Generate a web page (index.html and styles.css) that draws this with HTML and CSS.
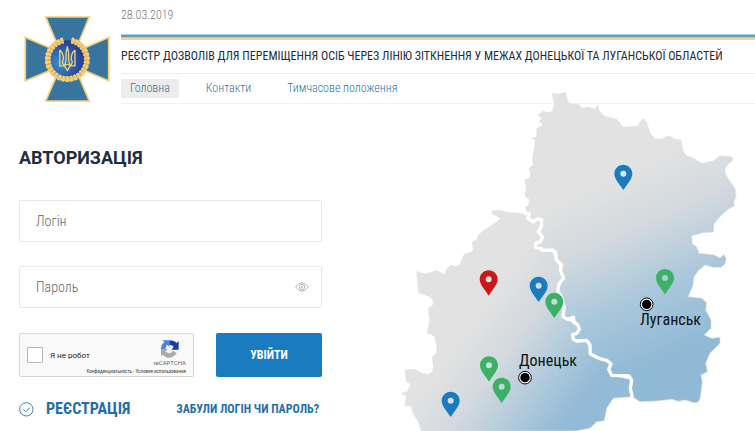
FILE: index.html
```html
<!DOCTYPE html>
<html lang="uk">

<head>
    <meta charset="UTF-8">
    <meta name="viewport" content="width=device-width, initial-scale=1.0">
    <title>Реєстр дозволів - Авторизація</title>
    <link rel="stylesheet" href="styles.css">
</head>

<body>
    <header class="header">
        <svg class="logo" viewBox="42 47 258 260" aria-hidden="true">
            <defs>
                <radialGradient id="medal" cx="0.3" cy="0.6" r="0.8">
                    <stop offset="0" stop-color="#3a8fc4" />
                    <stop offset="0.6" stop-color="#2a4fa0" />
                    <stop offset="1" stop-color="#20307c" />
                </radialGradient>
            </defs>
            <g fill="#37759f" stroke="#f0cd78" stroke-width="5">
                <path d="M107 50H238L196 152H150Z" />
                <path d="M107 304H238L196 204H150Z" />
                <path d="M45 112L148 156V200L45 243Z" />
                <path d="M297 112L196 156V200L297 243Z" />
            </g>
            <circle cx="172" cy="178" r="58" fill="url(#medal)" />
            <!-- wreath -->
            <path d="M160 121A59 59 0 1 0 184 121" fill="none" stroke="#e8b95e" stroke-width="14" />
            <path d="M160 121A59 59 0 1 0 184 121" fill="none" stroke="#f3cf80" stroke-width="18" stroke-dasharray="8 4" />
            <path d="M157 124A57 57 0 1 0 187 124" fill="none" stroke="#cf9a42" stroke-width="3" stroke-dasharray="4 8" />
            <!-- trident -->
            <path d="M149 150V198H163M195 150V198H181M149 150Q162 162 160 180Q153 184 163 198L172 212L181 198Q191 184 184 180Q182 162 195 150M172 139L168 160Q170 183 163 198M172 139L176 160Q174 183 181 198M163 198Q172 188 181 198" fill="none" stroke="#f1d07c" stroke-width="4" />
        </svg>
        <div class="header-content">
            <time class="date" datetime="2019-03-28">28.03.2019</time>
            <div class="stripe"></div>
            <h1 class="site-title">РЕЄСТР ДОЗВОЛІВ ДЛЯ ПЕРЕМІЩЕННЯ ОСІБ ЧЕРЕЗ ЛІНІЮ ЗІТКНЕННЯ У МЕЖАХ ДОНЕЦЬКОЇ ТА ЛУГАНСЬКОЇ ОБЛАСТЕЙ</h1>
            <nav class="nav">
                <a class="nav-link active" href="#">Головна</a>
                <a class="nav-link" href="#">Контакти</a>
                <a class="nav-link" href="#">Тимчасове положення</a>
            </nav>
        </div>
    </header>

    <main class="main">
        <form class="login">
            <h2 class="login-title">АВТОРИЗАЦІЯ</h2>
            <div class="field">
                <input class="field-input" type="text" name="login" placeholder="Логін" aria-label="Логін">
            </div>
            <div class="field">
                <input class="field-input" type="password" name="password" placeholder="Пароль" aria-label="Пароль">
                <button class="eye" type="button" aria-label="Показати пароль">
                    <svg width="14" height="10" viewBox="0 0 42 30" fill="none" stroke="#b4b4b4" stroke-width="3">
                        <path d="M2 15Q21 -11 40 15Q21 41 2 15Z" />
                        <circle cx="21" cy="15" r="8" />
                        <circle cx="21" cy="15" r="2" />
                    </svg>
                </button>
            </div>
            <div class="submit-row">
                <div class="captcha">
                    <input class="captcha-check" type="checkbox" id="robot">
                    <label class="captcha-label" for="robot">Я не робот</label>
                    <div class="captcha-brand">
                        <svg width="19" height="18" viewBox="0 0 57 54" aria-hidden="true">
                            <path d="M3 27C3 16 8 9 14 7L7 1H28V20L22 14C19 17 17 21 17 27Z" fill="#4a83e0" />
                            <path d="M28 1C38 1 45 4 50 9L56 3V29H34L41 21C38 17 34 15 28 15Z" fill="#1c3aa9" />
                            <path d="M3 27H24L17 34C21 41 34 42 39 32L50 40C38 58 18 56 8 44L3 49Z" fill="#ababab" />
                        </svg>
                        <span class="captcha-name">reCAPTCHA</span>
                    </div>
                    <small class="captcha-terms">Конфиденциальность - Условия использования</small>
                </div>
                <button class="login-button" type="submit">УВІЙТИ</button>
            </div>
            <div class="links">
                <a class="register" href="#">
                    <svg width="15" height="15" viewBox="0 0 45 45" fill="none" stroke="#3f86b8" stroke-width="3" aria-hidden="true">
                        <circle cx="22" cy="22" r="20" />
                        <path d="M13 22L20 29L33 17" />
                    </svg>
                    РЕЄСТРАЦІЯ
                </a>
                <a class="forgot" href="#">ЗАБУЛИ ЛОГІН ЧИ ПАРОЛЬ?</a>
            </div>
        </form>

        <svg class="map" viewBox="0 0 360 351">
            <defs>
                <linearGradient id="luhansk" gradientUnits="userSpaceOnUse" x1="600" y1="310" x2="830" y2="830">
                    <stop offset="0" stop-color="#e2e2e2" />
                    <stop offset="0.3" stop-color="#d3d9de" />
                    <stop offset="0.65" stop-color="#a9c7db" />
                    <stop offset="1" stop-color="#90b9d5" />
                </linearGradient>
                <linearGradient id="donetsk" gradientUnits="userSpaceOnUse" x1="260" y1="680" x2="590" y2="920">
                    <stop offset="0" stop-color="#e2e2e2" />
                    <stop offset="0.35" stop-color="#d3d9de" />
                    <stop offset="0.75" stop-color="#a9c7db" />
                    <stop offset="1" stop-color="#93bad6" />
                </linearGradient>
                <symbol id="pin" viewBox="0 0 54 76" overflow="visible">
                    <path fill-rule="evenodd" d="M27 0C12 0 0 12 0 27C0 44 16 58 27 76C38 58 54 44 54 27C54 12 42 0 27 0ZM27 18A9 9 0 1 1 27 36A9 9 0 1 1 27 18Z" />
                </symbol>
                <g id="city">
                    <circle r="19" fill="#fff" stroke="#000" stroke-width="3" />
                    <circle r="14" />
                </g>
            </defs>
            <svg width="360" height="351" viewBox="0 0 1080 1053">
                <path fill="url(#donetsk)" stroke="#dcdfe1" stroke-width="2" stroke-linejoin="round" d="M388 385L384 402L365 400L335 397L310 391L290 394L292 401L318 414L300 430L272 448L250 465L247 478L232 487L235 508L228 517L208 523L195 555L180 560L168 556L155 568L150 585L125 572L92 582L65 575L68 605L72 638L105 650L115 662L114 676L100 685L105 720L97 758L118 768L126 800L124 820L112 830L116 858L112 876L98 884L80 880L60 868L30 870L34 905L48 912L38 935L20 940L34 948L30 977L48 978L55 1000L70 1025L80 1053H540L585 1045L605 1025L628 1022L635 985L655 955L690 952L712 950L706 925L710 900L650 884L648 852L588 824L575 782L540 780L545 757L552 745L506 708L488 632L504 595L484 540L468 510L424 502L443 472L430 455L440 418L398 416L402 400Z" />
                <path fill="url(#luhansk)" stroke="#dcdfe1" stroke-width="2" stroke-linejoin="round" d="M388 385L402 375L403 358L390 347L394 328L390 300L405 294L407 278L402 266L416 254L413 235L422 180L412 176L425 170L426 145L442 138L443 130L432 125L440 115L430 105L446 93L454 98L472 95L478 75L472 40L490 43L510 37L520 68L530 73L550 73L560 85L580 82L600 88L608 76L612 92L630 110L665 118L675 130L685 142L718 140L730 138L740 119Q748 114 755 128L765 160L780 177L800 178Q823 160 838 177L858 180L862 205L870 225L895 235L920 250L955 243L975 228L1008 230Q1022 238 1002 250L990 265L990 280L1005 305L1020 325L1023 350L1016 365L1018 378L1000 387L970 415L957 432L955 456L925 458L890 467L892 492L905 500L912 520L955 524L975 534L986 524L994 535L990 552L978 562L955 562L930 555L910 572L897 590L894 615L880 650L920 655L935 668L932 690L948 720L948 745L928 765L950 775L975 772L975 790L945 820L932 850L937 875L918 885L922 905L917 945Q915 970 898 968L870 960L850 964L830 958L785 963L735 965L712 950L706 925L710 900L700 888L650 884L644 870L648 852L588 824L585 800L575 782L540 780L532 764L545 757L552 745L545 728L532 714L518 716L506 708L505 672L488 632L492 610L504 595L496 572L500 556L484 540L482 518L468 510L424 502L422 492L436 485L443 472L430 455L440 418L398 416L402 400L390 400Z" />
                <!-- border between the regions -->
                <path fill="none" stroke="#fff" stroke-width="10" stroke-linejoin="round" d="M386 384L390 400L404 400L398 414L416 426L424 417L440 418L439 440L430 455L443 472L436 485L422 490L422 502L440 506L440 511L472 510L482 518L484 540L500 554L496 570L506 595L493 610L488 632L499 650L508 680L504 710L518 718L535 712L537 726L548 733L553 748L545 760L533 764L535 778L545 783L575 781L585 795L586 822L615 836L637 842L648 852L641 868L650 886L702 888L710 900L706 925L712 952" />
                <use href="#pin" x="658" y="254" width="54" height="76" fill="#1a7cbf" />
                <use href="#pin" x="254" y="571" width="54" height="76" fill="#c91a1b" />
                <use href="#pin" x="404" y="590" width="54" height="76" fill="#1a7cbf" />
                <use href="#pin" x="451" y="638" width="54" height="76" fill="#3bb166" />
                <use href="#pin" x="783" y="567" width="54" height="76" fill="#3bb166" />
                <use href="#pin" x="255" y="829" width="54" height="76" fill="#3bb166" />
                <use href="#pin" x="293" y="893" width="54" height="76" fill="#3bb166" />
                <use href="#pin" x="140" y="935" width="54" height="76" fill="#1a7cbf" />
                <use href="#city" x="755" y="673" />
                <use href="#city" x="390" y="893" />
            </svg>
            <text class="city-name" x="245" y="245">Луганськ</text>
            <text class="city-name" x="124" y="286">Донецьк</text>
        </svg>
    </main>
</body>

</html>
```
FILE: styles.css
```css
* {
    box-sizing: border-box;
}

body {
    font-family: "Roboto Condensed", Roboto, "Liberation Sans", sans-serif;
    margin: 0;
    background-color: #fff;
    color: #1f2d3d;
}

a {
    text-decoration: none;
}

.header {
    display: flex;
    gap: 11px;
    padding-left: 24px;
}

.logo {
    flex: none;
    width: 86px;
    height: 86px;
    margin-top: 16px;
}

.header-content {
    flex: 1;
    min-width: 0;
}

.date {
    display: block;
    padding-top: 5px;
    font-size: 12px;
    font-weight: 300;
    line-height: 20px;
    color: #777;
}

.stripe {
    height: 6px;
    margin-top: 9px;
    background: linear-gradient(#a5cfe6 1px, #679db5 1px, #679db5 3px, #d0c691 3px, #d0c691 4px, #f7d585 4px);
}

.site-title {
    margin: 0;
    padding: 6px 0;
    border-bottom: 1px solid #eee;
    font-size: 12px;
    font-weight: 400;
    line-height: 21px;
    white-space: nowrap;
}

.nav {
    display: flex;
    gap: 18px;
    padding: 5px 0;
    border-bottom: 1px solid #f2f2f2;
}

.nav-link {
    padding: 0 9px;
    border-radius: 2px;
    font-size: 12px;
    font-weight: 300;
    line-height: 19px;
    color: #2f74a3;
}

.nav-link.active {
    background-color: #ececec;
}

.main {
    display: grid;
    grid-template-columns: 303px 1fr;
    gap: 73px;
    padding-left: 19px;
}

.login-title {
    margin: 42px 0 30px;
    font-family: Roboto, "Liberation Sans", sans-serif;
    font-size: 18px;
    font-weight: 700;
    line-height: 24px;
}

.field {
    position: relative;
    margin-bottom: 24px;
}

.field-input {
    display: block;
    width: 100%;
    height: 42px;
    padding: 0 40px 0 16px;
    border: 1px solid #e8e8e8;
    border-radius: 2px;
    font-family: inherit;
    font-size: 14px;
    font-weight: 300;
}

.field-input::placeholder {
    color: #666;
    opacity: 1;
}

.eye {
    position: absolute;
    top: 16px;
    right: 13px;
    display: flex;
    padding: 0;
    border: none;
    background: none;
    cursor: pointer;
}

.submit-row {
    display: flex;
    gap: 22px;
    margin-top: 25px;
}

.captcha {
    flex: 1;
    display: grid;
    grid-template-columns: 16px 1fr auto;
    grid-template-rows: 33px 7px;
    column-gap: 7px;
    align-items: center;
    height: 44px;
    padding: 1px 7px;
    border: 1px solid #d8d8d8;
    border-radius: 2px;
    background-color: #f9f9f9;
}

.captcha-check {
    appearance: none;
    width: 16px;
    height: 16px;
    margin: 6px 0 0;
    border: 1px solid #b5b5b5;
    border-radius: 1px;
    background-color: #fff;
}

.captcha-label {
    padding-top: 7px;
    font-family: Roboto, "Liberation Sans", sans-serif;
    font-size: 8px;
    color: #222;
}

.captcha-brand {
    display: flex;
    flex-direction: column;
    align-items: center;
    padding-top: 4px;
}

.captcha-name {
    font-family: Roboto, "Liberation Sans", sans-serif;
    font-size: 6px;
    line-height: 10px;
    color: #666;
}

.captcha-terms {
    grid-column: 1 / -1;
    font-size: 5px;
    line-height: 7px;
    text-align: right;
    color: #444;
}

.login-button {
    width: 106px;
    height: 44px;
    border: none;
    border-radius: 2px;
    background-color: #1a7cbf;
    color: #fff;
    font-family: inherit;
    font-size: 12px;
    font-weight: 700;
    cursor: pointer;
}

.links {
    display: flex;
    justify-content: space-between;
    align-items: center;
    margin-top: 22px;
    padding-right: 3px;
    line-height: 20px;
    font-weight: 700;
}

.register {
    display: flex;
    align-items: center;
    gap: 12px;
    font-size: 16px;
    color: #1f6fa9;
}

.forgot {
    font-size: 12px;
    color: #1f6fa9;
}

.map {
    position: relative;
    width: 100%;
    margin-top: -24px;
}

.city-name {
    font-size: 16px;
    fill: #111;
}
```
